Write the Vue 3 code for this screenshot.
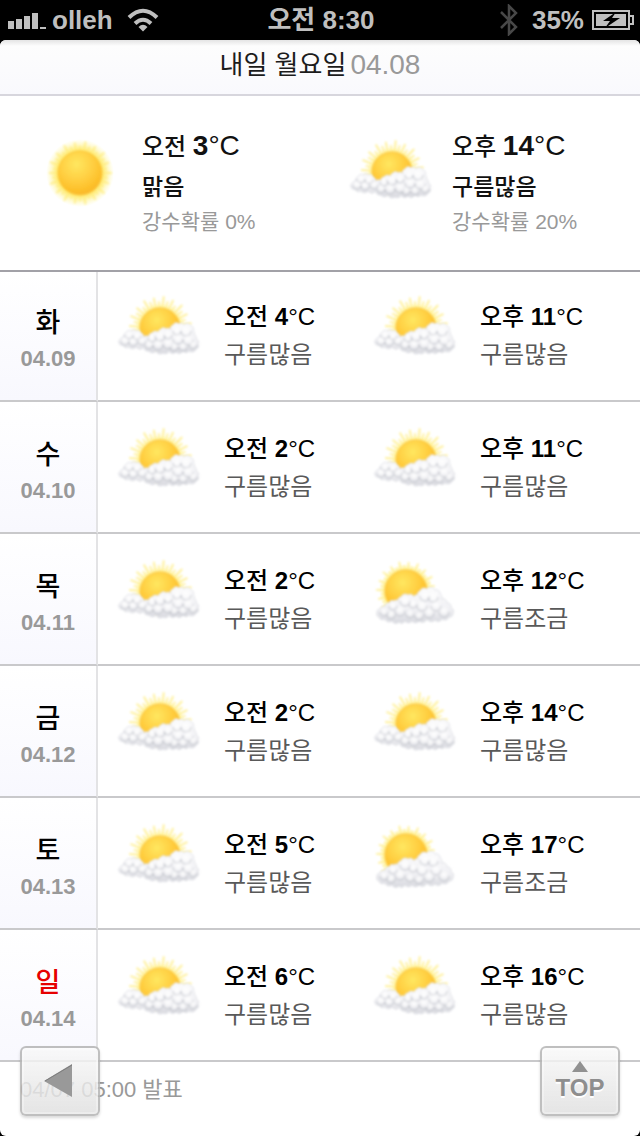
<script setup>
const today = [
  { period: '오전', temp: 3, sky: '맑음', rain: 0, icon: 'sunny' },
  { period: '오후', temp: 14, sky: '구름많음', rain: 20, icon: 'cloudy' },
]

const days = [
  { name: '화', date: '04.09', am: 4, pm: 11, few: false },
  { name: '수', date: '04.10', am: 2, pm: 11, few: false },
  { name: '목', date: '04.11', am: 2, pm: 12, few: true },
  { name: '금', date: '04.12', am: 2, pm: 14, few: false },
  { name: '토', date: '04.13', am: 5, pm: 17, few: true },
  { name: '일', date: '04.14', am: 6, pm: 16, few: false, holiday: true },
].map((d) => ({
  ...d,
  halves: [
    { period: '오전', temp: d.am, sky: '구름많음', icon: 'cloudy' },
    { period: '오후', temp: d.pm, sky: d.few ? '구름조금' : '구름많음', icon: d.few ? 'partly' : 'cloudy' },
  ],
}))

// Tapered sun rays with alternating lengths around a centre point.
function rays({ cx, cy, r, reach, from, to, count }) {
  let d = ''
  for (let i = 0; i <= count; i++) {
    const a = ((from + ((to - from) * i) / count) * Math.PI) / 180
    const len = reach - [0, 4, 1, 5][i % 4]
    const w = 0.08
    const p = (ang, rad) => `${(cx + Math.cos(ang) * rad).toFixed(1)} ${(cy + Math.sin(ang) * rad).toFixed(1)}`
    d += `M${p(a - w, r - 1)}L${p(a - w * 0.4, len)}L${p(a + w * 0.4, len)}L${p(a + w, r - 1)}Z`
  }
  return d
}

// Cloud edge: an outward arc between each pair of neighbouring points.
function outline(points) {
  const [first, ...rest] = points
  let prev = first
  let d = `M${first.join(' ')}`
  for (const p of [...rest, first]) {
    const r = (Math.hypot(p[0] - prev[0], p[1] - prev[1]) * 0.6).toFixed(1)
    d += `A${r} ${r} 0 0 1 ${p.join(' ')}`
    prev = p
  }
  return d + 'Z'
}

// Shaded underside of a puff.
const crease = ([x, y, r]) => `M${x - r} ${y}A${r} ${r} 0 0 0 ${x + r} ${y}`

const suns = {
  sunny: { cx: 42, cy: 31, r: 22, reach: 32, glow: 34, from: 0, to: 350, count: 35 },
  cloudy: { cx: 44, cy: 30, r: 20, reach: 32, glow: 25, from: 165, to: 370, count: 22 },
  partly: { cx: 34, cy: 29, r: 21, reach: 30, glow: 27, from: 145, to: 350, count: 22 },
}

const clouds = {
  cloudy: {
    edge: [
      [3, 45], [5, 41], [8, 39], [10, 35], [15, 33], [20, 33], [25, 35], [27, 40], [33, 39], [36, 35],
      [43, 35], [45, 31], [50, 31], [55, 32], [57, 27], [63, 26], [68, 27], [75, 28], [77, 33],
      [78, 37], [80, 41], [82, 46], [80, 51], [73, 53], [67, 53], [60, 54], [53, 53], [47, 55],
      [40, 53], [33, 53], [28, 49], [20, 49], [13, 49], [7, 47],
    ],
    puffs: [
      [13, 37, 4], [21, 38, 4], [9, 43, 4], [17, 44, 4], [26, 43, 4], [36, 40, 4], [44, 38, 5],
      [52, 37, 4], [33, 47, 4], [42, 47, 5], [52, 46, 5], [61, 33, 4], [70, 33, 5], [62, 41, 5],
      [72, 42, 5], [58, 49, 4], [67, 49, 4], [77, 47, 4],
    ],
  },
  partly: {
    edge: [
      [5, 51], [8, 47], [13, 45], [17, 41], [22, 39], [26, 39], [29, 35], [36, 33], [42, 35], [46, 33],
      [48, 29], [55, 27], [63, 28], [68, 32], [69, 37], [75, 41], [79, 46], [81, 51], [77, 55],
      [70, 57], [63, 58], [55, 57], [47, 59], [40, 59], [33, 59], [27, 60], [20, 59], [13, 57], [7, 55],
    ],
    puffs: [
      [21, 44, 4], [12, 50, 4], [33, 39, 5], [41, 42, 4], [28, 49, 5], [19, 53, 4], [53, 34, 5],
      [61, 35, 5], [50, 44, 5], [64, 44, 5], [38, 52, 4], [57, 51, 5], [72, 50, 5], [47, 54, 4],
    ],
  },
}
</script>

<template>
  <svg class="defs" aria-hidden="true">
    <defs>
      <radialGradient id="sunFill" cx="42%" cy="30%" r="70%">
        <stop offset="0" stop-color="#ffe760" />
        <stop offset="0.5" stop-color="#ffd043" />
        <stop offset="0.85" stop-color="#fdc02a" />
        <stop offset="1" stop-color="#f9b82c" />
      </radialGradient>
      <radialGradient id="glow">
        <stop offset="0.6" stop-color="#ffe23c" stop-opacity="0.9" />
        <stop offset="1" stop-color="#fff68c" stop-opacity="0" />
      </radialGradient>
      <linearGradient id="cloudFill" x1="0" y1="0" x2="0" y2="1">
        <stop offset="0" stop-color="#fcfcfd" />
        <stop offset="0.6" stop-color="#f1f1f4" />
        <stop offset="1" stop-color="#d8d9df" />
      </linearGradient>
      <radialGradient id="puffFill">
        <stop offset="0" stop-color="#fff" />
        <stop offset="1" stop-color="#fff" stop-opacity="0" />
      </radialGradient>
      <filter id="soft" x="-20%" y="-20%" width="140%" height="140%">
        <feGaussianBlur stdDeviation="0.8" />
      </filter>
      <symbol v-for="(s, kind) in suns" :id="kind" :key="kind" viewBox="0 0 84 64" overflow="visible">
        <circle :cx="s.cx" :cy="s.cy" :r="s.glow" fill="url(#glow)" />
        <path :d="rays(s)" fill="#ffec78" opacity="0.65" filter="url(#soft)" />
        <circle :cx="s.cx" :cy="s.cy" :r="s.r" fill="url(#sunFill)" stroke="#fbc540" filter="url(#soft)" />
        <g v-if="clouds[kind]" filter="url(#soft)">
          <path :d="outline(clouds[kind].edge)" fill="url(#cloudFill)" stroke="#e2e3e8" />
          <template v-for="(p, i) in clouds[kind].puffs" :key="i">
            <path :d="crease(p)" fill="none" stroke="#b4b6c0" stroke-width="2" opacity="0.35" />
            <circle :cx="p[0]" :cy="p[1] - 1" :r="p[2]" fill="url(#puffFill)" />
          </template>
        </g>
      </symbol>
    </defs>
  </svg>

  <header class="status">
    <div class="side">
      <svg class="signal" viewBox="0 0 38 16" fill="#bfbfbf">
        <path d="M0 8h6v8H0zM8 6h6v10H8zM16 3h6v13h-6zM24 0h6v16h-6zM32 14h6v2h-6z" />
      </svg>
      <span>olleh</span>
      <svg class="wifi" viewBox="0 0 32 24" fill="none" stroke="#bfbfbf" stroke-width="4">
        <path d="M2 9.500Q16 -4 30 9.500M8 15.500Q16 8 24 15.500" />
        <path d="M11.500 19Q16 14.500 20.500 19L16 23.500Z" fill="#bfbfbf" stroke="none" />
      </svg>
    </div>
    <time>오전 8:30</time>
    <div class="side end">
      <svg class="bluetooth" viewBox="0 0 18 32" fill="none" stroke="#484848" stroke-width="2.500">
        <path d="M1 8l15 15-7 7V2l7 7L1 24" />
      </svg>
      <span>35%</span>
      <svg class="battery" viewBox="0 0 42 20">
        <path d="M1 1h36v18H1zM38 6h3v8h-3" fill="none" stroke="#bfbfbf" stroke-width="2" />
        <path d="M4 4h30v12H4z" fill="#bfbfbf" />
        <path d="M24 2L11 11h7l-5 7 15-10h-8l4-6z" fill="#000" />
      </svg>
    </div>
  </header>

  <main class="page">
    <h1>내일 월요일<span>04.08</span></h1>

    <section class="today">
      <article v-for="t in today" :key="t.period">
        <svg class="weather" viewBox="0 0 84 64"><use :href="'#' + t.icon" /></svg>
        <div>
          <p class="temp">{{ t.period }} <b>{{ t.temp }}</b><span>°C</span></p>
          <p class="sky">{{ t.sky }}</p>
          <p class="rain">강수확률 <span>{{ t.rain }}%</span></p>
        </div>
      </article>
    </section>

    <table>
      <tbody>
        <tr v-for="d in days" :key="d.date">
          <th scope="row">
            <span class="day" :class="{ holiday: d.holiday }">{{ d.name }}</span>
            <span class="date">{{ d.date }}</span>
          </th>
          <td v-for="h in d.halves" :key="h.period">
            <div class="half">
              <svg class="weather" viewBox="0 0 84 64"><use :href="'#' + h.icon" /></svg>
              <div>
                <p class="temp">{{ h.period }} <b>{{ h.temp }}</b>°C</p>
                <p class="sky">{{ h.sky }}</p>
              </div>
            </div>
          </td>
        </tr>
      </tbody>
    </table>

    <footer>04/07 05:00 발표</footer>

    <nav>
      <button type="button" aria-label="뒤로">
        <svg class="back" viewBox="0 0 28 34"><path d="M28 0v33L0 17z" fill="#999" /><path d="M28 1L1 17" stroke="#7c7c7c" fill="none" /></svg>
      </button>
      <button type="button">
        <svg class="up" viewBox="0 0 16 11"><path d="M8 0l8 11H0z" fill="#919191" /></svg>
        TOP
      </button>
    </nav>
  </main>
</template>

<style>
body {
  background: #000;
}

#app {
  display: flex;
  flex-direction: column;
  min-height: 100vh;
  font-family: "Liberation Sans", "Noto Sans CJK KR", sans-serif;
}
</style>

<style scoped>
.defs {
  position: absolute;
  width: 0;
  height: 0;
}

.status {
  display: grid;
  grid-template-columns: 1fr auto 1fr;
  align-items: center;
  height: 40px;
  padding: 0 6px 0 8px;
  color: #bfbfbf;
  font-size: 26px;
  font-weight: 700;
  line-height: 40px;
}

.side {
  display: flex;
  align-items: center;
  gap: 6px;
}

.end {
  justify-content: flex-end;
  gap: 8px;
}

.signal {
  width: 38px;
  height: 16px;
  margin-top: 2px;
}

.wifi {
  width: 32px;
  height: 24px;
  margin-left: 8px;
}

.bluetooth {
  width: 18px;
  height: 32px;
  margin-right: 6px;
}

.battery {
  width: 42px;
  height: 20px;
}

.page {
  position: relative;
  flex: 1;
  overflow: hidden;
  border-radius: 6px;
  background: #fff;
}

h1 {
  box-sizing: border-box;
  height: 56px;
  margin: 0;
  border-bottom: 2px solid #d7d6dd;
  background: linear-gradient(#e4e4e4, #fdfdfd 6px, #f9f9fd);
  color: #1c1c1c;
  font-size: 26px;
  font-weight: 400;
  line-height: 50px;
  text-align: center;
}

h1 span {
  margin-left: 4px;
  color: #999;
  font-size: 28px;
}

p {
  margin: 0;
  white-space: nowrap;
}

.weather {
  flex: none;
  width: 84px;
  height: 64px;
  overflow: visible;
}

.today {
  box-sizing: border-box;
  display: grid;
  grid-template-columns: 1fr 1fr;
  height: 176px;
  padding: 30px 0 0 20px;
  border-bottom: 2px solid #a2a1a7;
}

.today article {
  display: flex;
  gap: 20px;
  padding-left: 18px;
}

.today .weather {
  margin-top: 16px;
}

.today p {
  color: #111;
  font-size: 24px;
  line-height: 40px;
}

.today .temp,
.today .sky {
  font-weight: 500;
}

.today .temp b,
.today .temp span {
  font-size: 28px;
  font-weight: 400;
}

.today .temp b {
  font-weight: 700;
}

.today .sky {
  font-size: 23px;
}

.today .rain {
  color: #999;
  font-size: 21px;
  line-height: 30px;
}

table {
  width: 100%;
  table-layout: fixed;
  border-collapse: separate;
  border-spacing: 0;
}

th,
td {
  box-sizing: border-box;
  height: 132px;
  padding: 0;
  border-bottom: 2px solid #c9c9cb;
  vertical-align: bottom;
}

tr:first-child th,
tr:first-child td {
  height: 130px;
}

th {
  width: 98px;
  border-right: 2px solid #e3e3e5;
  background: linear-gradient(#fff, #f8f8fe);
  text-align: center;
}

td:nth-child(2) {
  width: 40%;
}

th span {
  display: block;
}

.day {
  color: #000;
  font-size: 27px;
  font-weight: 500;
  line-height: 38px;
}

.holiday {
  color: #e60000;
}

.date {
  padding-bottom: 24px;
  color: #999;
  font-size: 22px;
  line-height: 34px;
}

.half {
  display: flex;
  gap: 24px;
  padding: 0 0 26px 18px;
}

.half .temp {
  color: #000;
  font-size: 24px;
  font-weight: 500;
  line-height: 38px;
}

.half .sky {
  color: #595959;
  font-size: 24px;
  line-height: 38px;
}

footer {
  padding: 12px 20px;
  color: #999;
  font-size: 22px;
  line-height: 32px;
}

nav {
  position: absolute;
  right: 20px;
  bottom: 20px;
  left: 20px;
  display: flex;
  justify-content: space-between;
}

button {
  display: flex;
  flex-direction: column;
  align-items: center;
  justify-content: center;
  gap: 2px;
  width: 80px;
  height: 70px;
  padding: 0;
  border: 2px solid rgba(180, 180, 180, 0.85);
  border-radius: 6px;
  background: linear-gradient(rgba(248, 248, 248, 0.8), rgba(224, 224, 224, 0.85)) padding-box;
  box-shadow: inset 0 0 0 2px rgba(255, 255, 255, 0.3), 0 2px 3px rgba(0, 0, 0, 0.15);
  color: #8e8e8e;
  font-family: inherit;
  font-size: 24px;
  font-weight: 700;
  line-height: 28px;
  text-shadow: 0 2px 0 #fff;
}

.back {
  width: 28px;
  height: 34px;
  margin-right: 4px;
}

.up {
  width: 16px;
  height: 11px;
}
</style>
